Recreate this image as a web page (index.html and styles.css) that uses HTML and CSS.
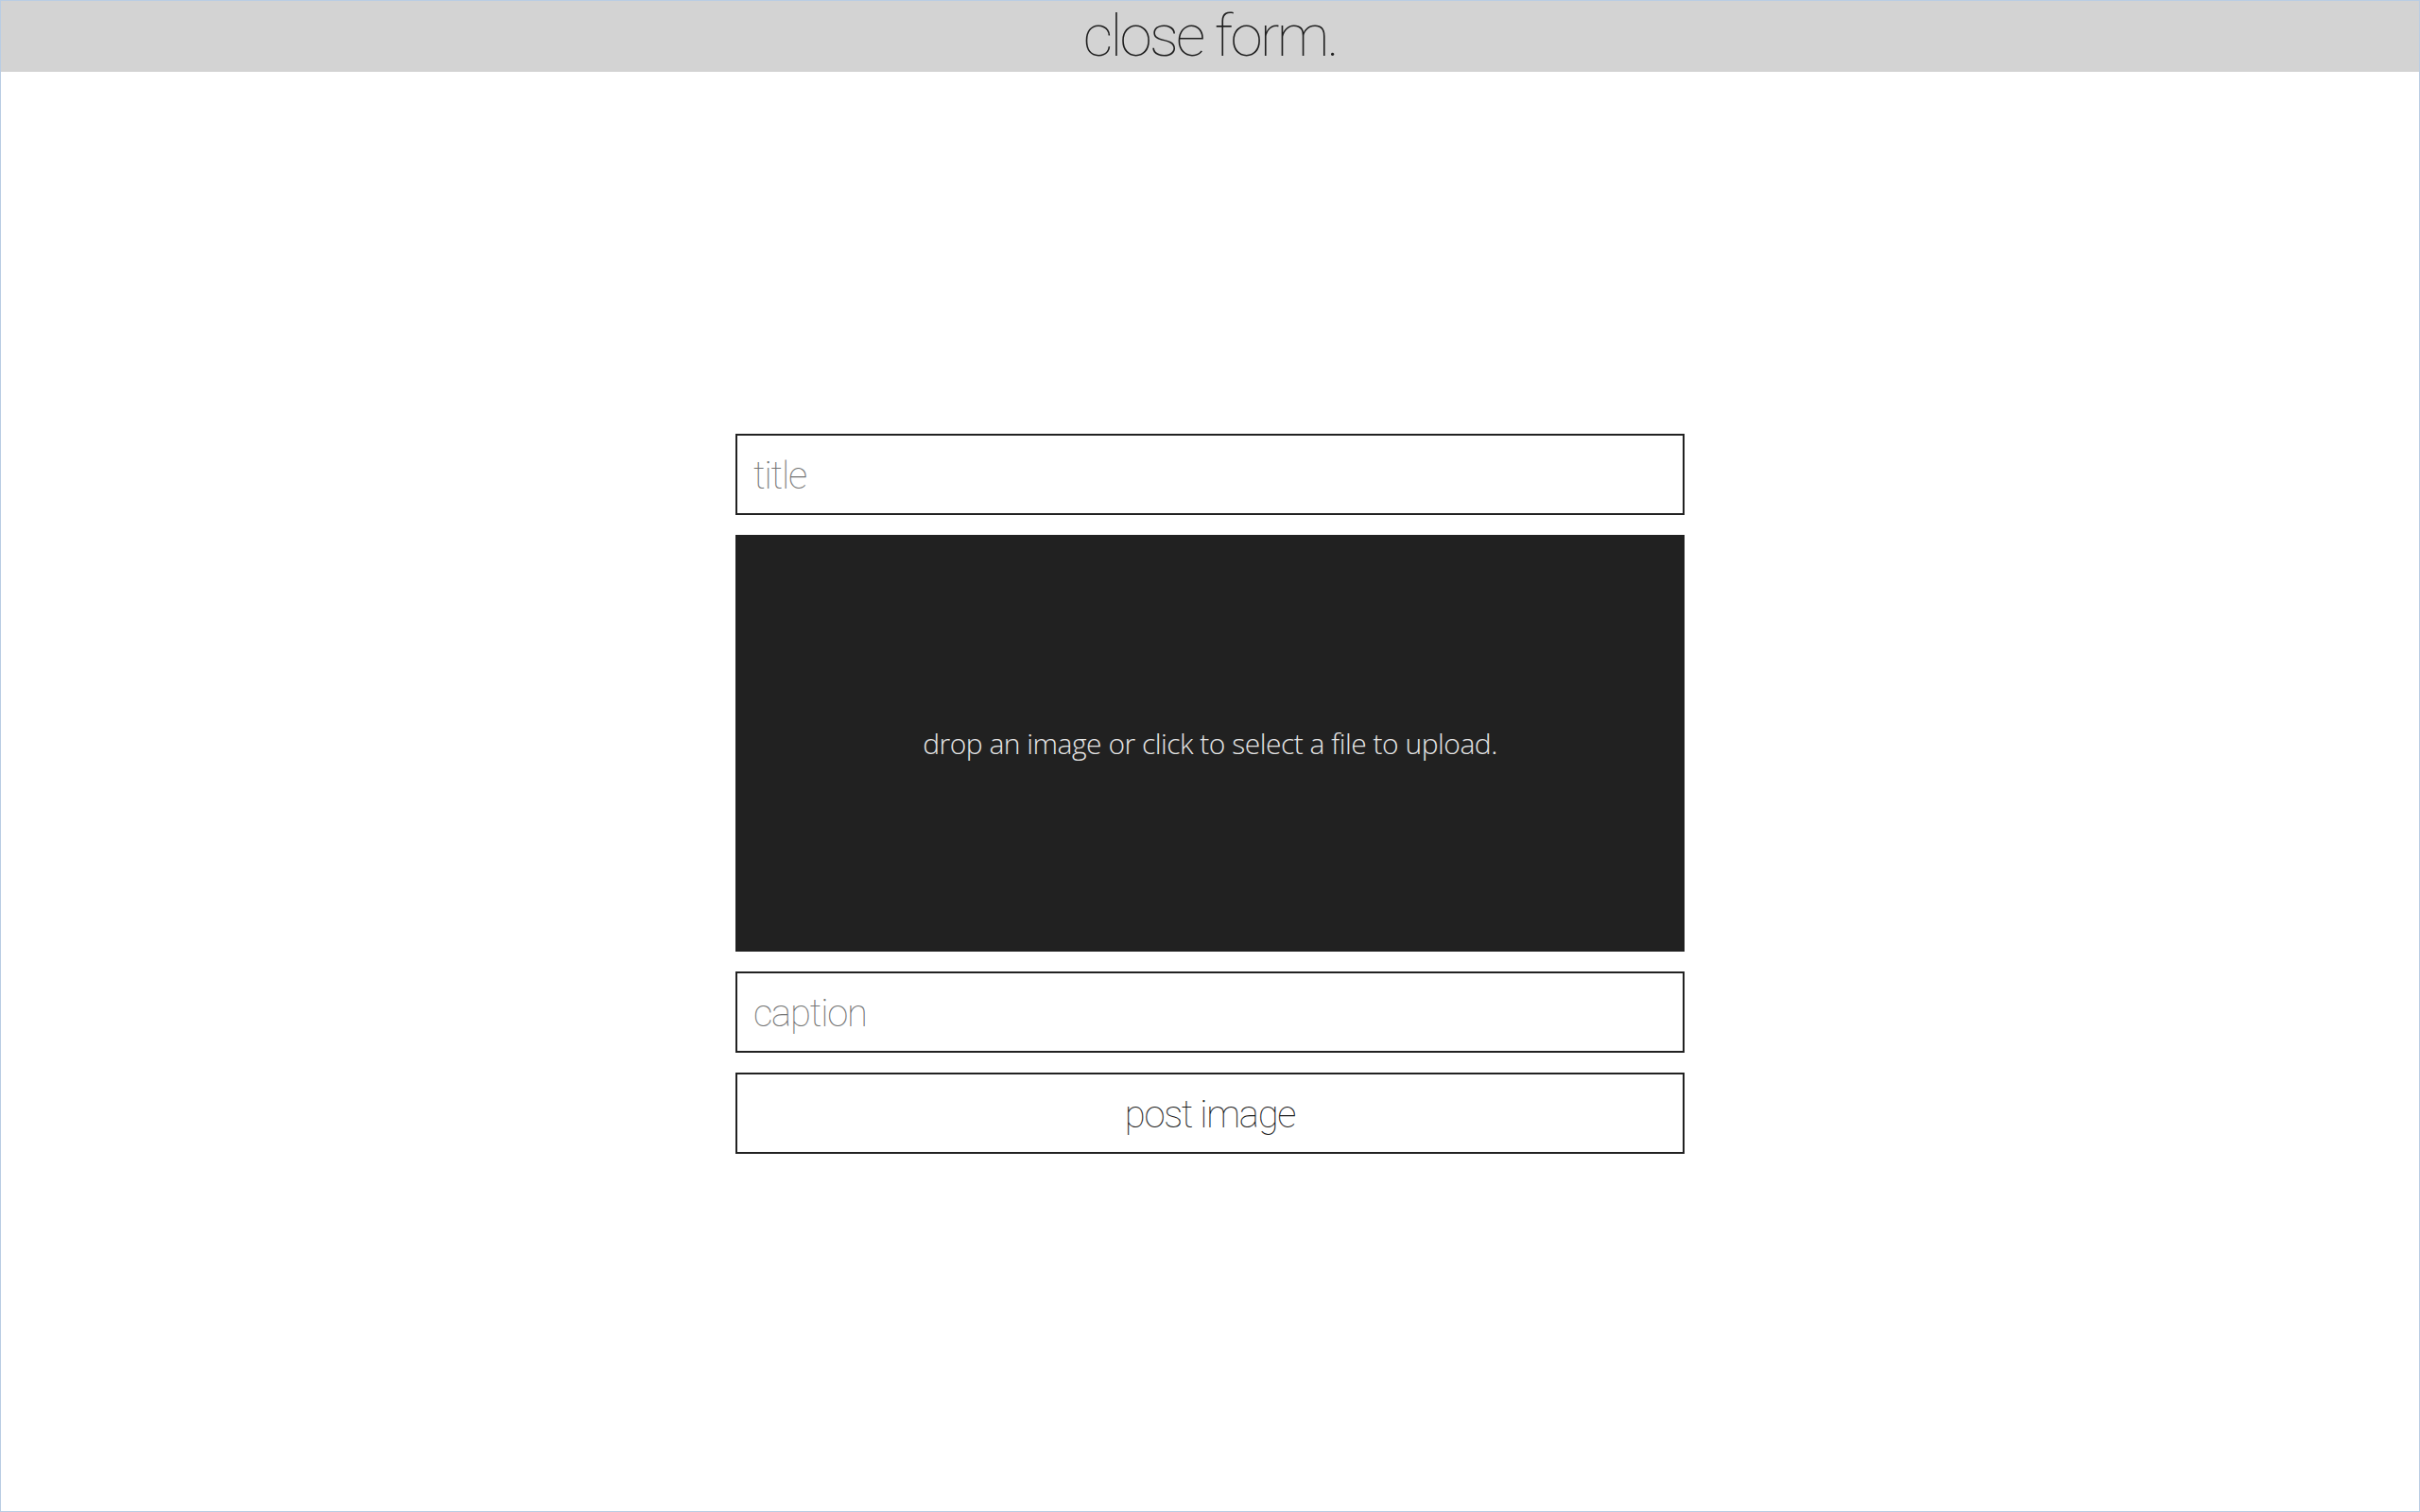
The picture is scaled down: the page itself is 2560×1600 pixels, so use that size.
FILE: index.html
```html
<!DOCTYPE html>
<html lang="en">
<head>
<meta charset="utf-8">
<title>post image</title>
<link rel="stylesheet" href="styles.css">
</head>
<body>
  <header class="topbar">
    <span class="close-link">close form.</span>
  </header>
  <main class="stage">
    <form class="upload-form">
      <input class="field" type="text" placeholder="title">
      <div class="dropzone">
        <span class="dropzone-text">drop an image or click to select a file to upload.</span>
      </div>
      <input class="field" type="text" placeholder="caption">
      <button class="submit" type="button">post image</button>
    </form>
  </main>
</body>
</html>
```
FILE: styles.css
```css
html, body {
  height: 100%;
}
* {
  box-sizing: border-box;
}
body {
  margin: 0;
  border: 1px solid #b9cde3;
  background: #ffffff;
  display: flex;
  flex-direction: column;
  font-family: Roboto, "Liberation Sans", sans-serif;
}
.topbar {
  height: 75px;
  background: #d3d3d3;
  display: flex;
  justify-content: center;
  align-items: flex-start;
  flex: none;
}
.close-link {
  font-family: Roboto, sans-serif;
  font-weight: 100;
  font-size: 62px;
  line-height: 74px;
  letter-spacing: -2.75px;
  color: #1e1e1e;
}
.stage {
  flex: 1;
  display: flex;
  align-items: center;
  justify-content: center;
  padding-top: 4px;
}
.upload-form {
  width: 1004px;
  display: flex;
  flex-direction: column;
  gap: 21px;
}
.field {
  display: block;
  width: 100%;
  height: 86px;
  border: 2px solid #222222;
  border-radius: 0;
  padding: 4px 17px 0;
  margin: 0;
  background: #ffffff;
  font-family: Roboto, sans-serif;
  font-weight: 100;
  font-size: 40px;
  letter-spacing: -1.2px;
  color: #222222;
  outline: none;
}
.field::placeholder {
  color: #727272;
}
.dropzone {
  height: 441px;
  background: #212121;
  display: flex;
  align-items: center;
  justify-content: center;
}
.dropzone-text {
  font-family: "Open Sans", "Noto Sans", sans-serif;
  font-weight: 300;
  font-size: 30px;
  letter-spacing: -0.5px;
  color: #e6e6e6;
}
.submit {
  display: block;
  width: 100%;
  height: 86px;
  border: 2px solid #222222;
  border-radius: 0;
  margin: 0;
  padding: 4px 0 0;
  background: #ffffff;
  font-family: Roboto, sans-serif;
  font-weight: 100;
  font-size: 40px;
  letter-spacing: -1.3px;
  color: #1e1e1e;
  cursor: pointer;
}
```
